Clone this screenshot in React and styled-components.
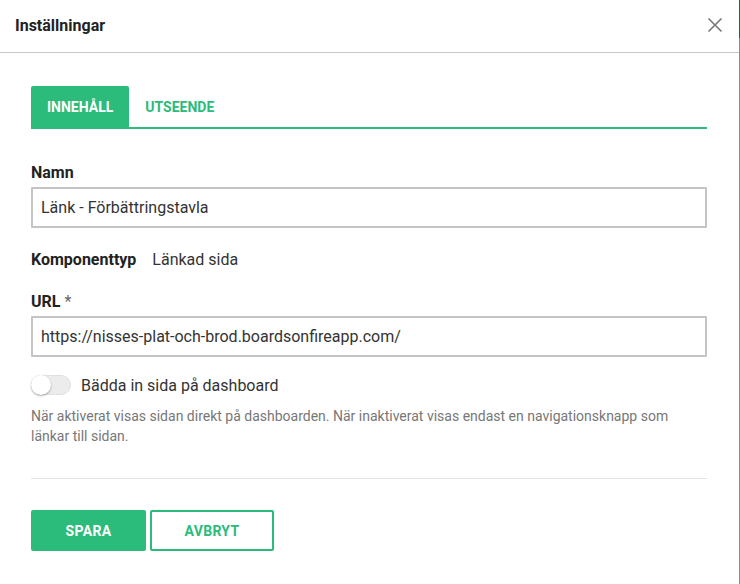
import { useState } from "react";
import styled, { createGlobalStyle } from "styled-components";

const GlobalStyle = createGlobalStyle`
    html, body {
        margin: 0;
        padding: 0;
    }
    body {
        background: linear-gradient(#17694a 0 38px, #8c8c8c 38px);
        font-family: Roboto, "Liberation Sans", sans-serif;
        color: #222;
    }
`;

export default function App() {
    const [tab, setTab] = useState("content");
    const [embed, setEmbed] = useState(false);
    return (
        <>
            <GlobalStyle />
            <Dialog>
                <Header>
                    <Title>Inställningar</Title>
                    <CloseButton aria-label="Stäng">
                        <svg width="16" height="16" viewBox="0 0 16 16">
                            <path d="M1.5 1.5 L14.5 14.5 M14.5 1.5 L1.5 14.5" stroke="#777" strokeWidth="1.6" fill="none" />
                        </svg>
                    </CloseButton>
                </Header>
                <Body>
                    <Tabs>
                        <Tab active={tab === "content"} onClick={() => setTab("content")}>Innehåll</Tab>
                        <Tab active={tab === "look"} onClick={() => setTab("look")}>Utseende</Tab>
                    </Tabs>

                    <Label>Namn</Label>
                    <Input defaultValue="Länk - Förbättringstavla" />

                    <InfoRow>
                        <InfoLabel>Komponenttyp</InfoLabel>
                        <span>Länkad sida</span>
                    </InfoRow>

                    <Label>URL <Required>*</Required></Label>
                    <Input defaultValue="https://nisses-plat-och-brod.boardsonfireapp.com/" />

                    <ToggleRow onClick={() => setEmbed(!embed)}>
                        <Track on={embed}><Knob on={embed} /></Track>
                        Bädda in sida på dashboard
                    </ToggleRow>
                    <Help>
                        När aktiverat visas sidan direkt på dashboarden. När inaktiverat visas endast en navigationsknapp som länkar till sidan.
                    </Help>

                    <Divider />

                    <Buttons>
                        <Button primary>Spara</Button>
                        <Button>Avbryt</Button>
                    </Buttons>
                </Body>
            </Dialog>
        </>
    );
}

const Dialog = styled.div`
    width: 739px;
    height: 584px;
    background: #fff;
    box-sizing: border-box;
`;

const Header = styled.div`
    height: 53px;
    box-sizing: border-box;
    border-bottom: 1px solid #c6c6c6;
    display: flex;
    align-items: center;
    justify-content: space-between;
    padding: 0 16px 2px 15px;
`;

const Title = styled.h1`
    margin: 0;
    font-size: 16px;
    font-weight: 700;
    color: #222;
`;

const CloseButton = styled.button`
    border: none;
    background: none;
    padding: 0;
    display: flex;
    cursor: pointer;
`;

const Body = styled.div`
    padding: 33px 32px 0 31px;
`;

const Tabs = styled.div`
    display: flex;
    border-bottom: 2px solid #2bbb7a;
    margin-bottom: 34px;
`;

const Tab = styled.button`
    height: 41px;
    padding: 0 16px;
    border: none;
    border-radius: 2px 2px 0 0;
    font-family: Roboto, "Liberation Sans", sans-serif;
    font-size: 14px;
    font-weight: 700;
    text-transform: uppercase;
    cursor: pointer;
    background: ${({ active }) => (active ? "#2bbb7a" : "transparent")};
    color: ${({ active }) => (active ? "#fff" : "#2bbb7a")};
`;

const Label = styled.div`
    font-size: 16px;
    line-height: 19px;
    font-weight: 700;
    color: #222;
    margin-bottom: 5px;
`;

const Required = styled.span`
    font-weight: 400;
    color: #666;
`;

const Input = styled.input`
    display: block;
    width: 100%;
    height: 41px;
    box-sizing: border-box;
    border: 2px solid #c4c4c4;
    border-radius: 1px;
    padding: 0 8px;
    font-family: Roboto, "Liberation Sans", sans-serif;
    font-size: 16px;
    color: #333;
    outline: none;
`;

const InfoRow = styled.div`
    display: flex;
    gap: 16px;
    align-items: baseline;
    font-size: 16px;
    line-height: 19px;
    color: #333;
    margin: 22px 0 23px;
`;

const InfoLabel = styled.span`
    font-weight: 700;
    color: #222;
`;

const ToggleRow = styled.div`
    display: flex;
    align-items: center;
    gap: 10px;
    font-size: 16px;
    color: #333;
    margin-top: 18px;
    height: 20px;
    cursor: pointer;
`;

const Track = styled.div`
    position: relative;
    width: 40px;
    height: 20px;
    border-radius: 10px;
    background: ${({ on }) => (on ? "#9be0bf" : "#ececec")};
    box-sizing: border-box;
    border: 1px solid #e0e0e0;
`;

const Knob = styled.div`
    position: absolute;
    top: -1px;
    left: ${({ on }) => (on ? "19px" : "-1px")};
    width: 20px;
    height: 20px;
    border-radius: 50%;
    background: ${({ on }) => (on ? "#2bbb7a" : "#fff")};
    box-shadow: 0 1px 2px rgba(0, 0, 0, 0.35);
`;

const Help = styled.p`
    margin: 11px 0 0;
    font-size: 14px;
    line-height: 20px;
    color: #777;
`;

const Divider = styled.hr`
    border: none;
    border-top: 1px solid #e4e4e4;
    margin: 32px 0 31px;
`;

const Buttons = styled.div`
    display: flex;
    gap: 4px;
`;

const Button = styled.button`
    height: 41px;
    min-width: ${({ primary }) => (primary ? "115px" : "124px")};
    box-sizing: border-box;
    border: 2px solid #2bbb7a;
    border-radius: 2px;
    font-family: Roboto, "Liberation Sans", sans-serif;
    font-size: 14px;
    font-weight: 700;
    letter-spacing: 0.3px;
    text-transform: uppercase;
    cursor: pointer;
    background: ${({ primary }) => (primary ? "#2bbb7a" : "#fff")};
    color: ${({ primary }) => (primary ? "#fff" : "#2bbb7a")};
`;
